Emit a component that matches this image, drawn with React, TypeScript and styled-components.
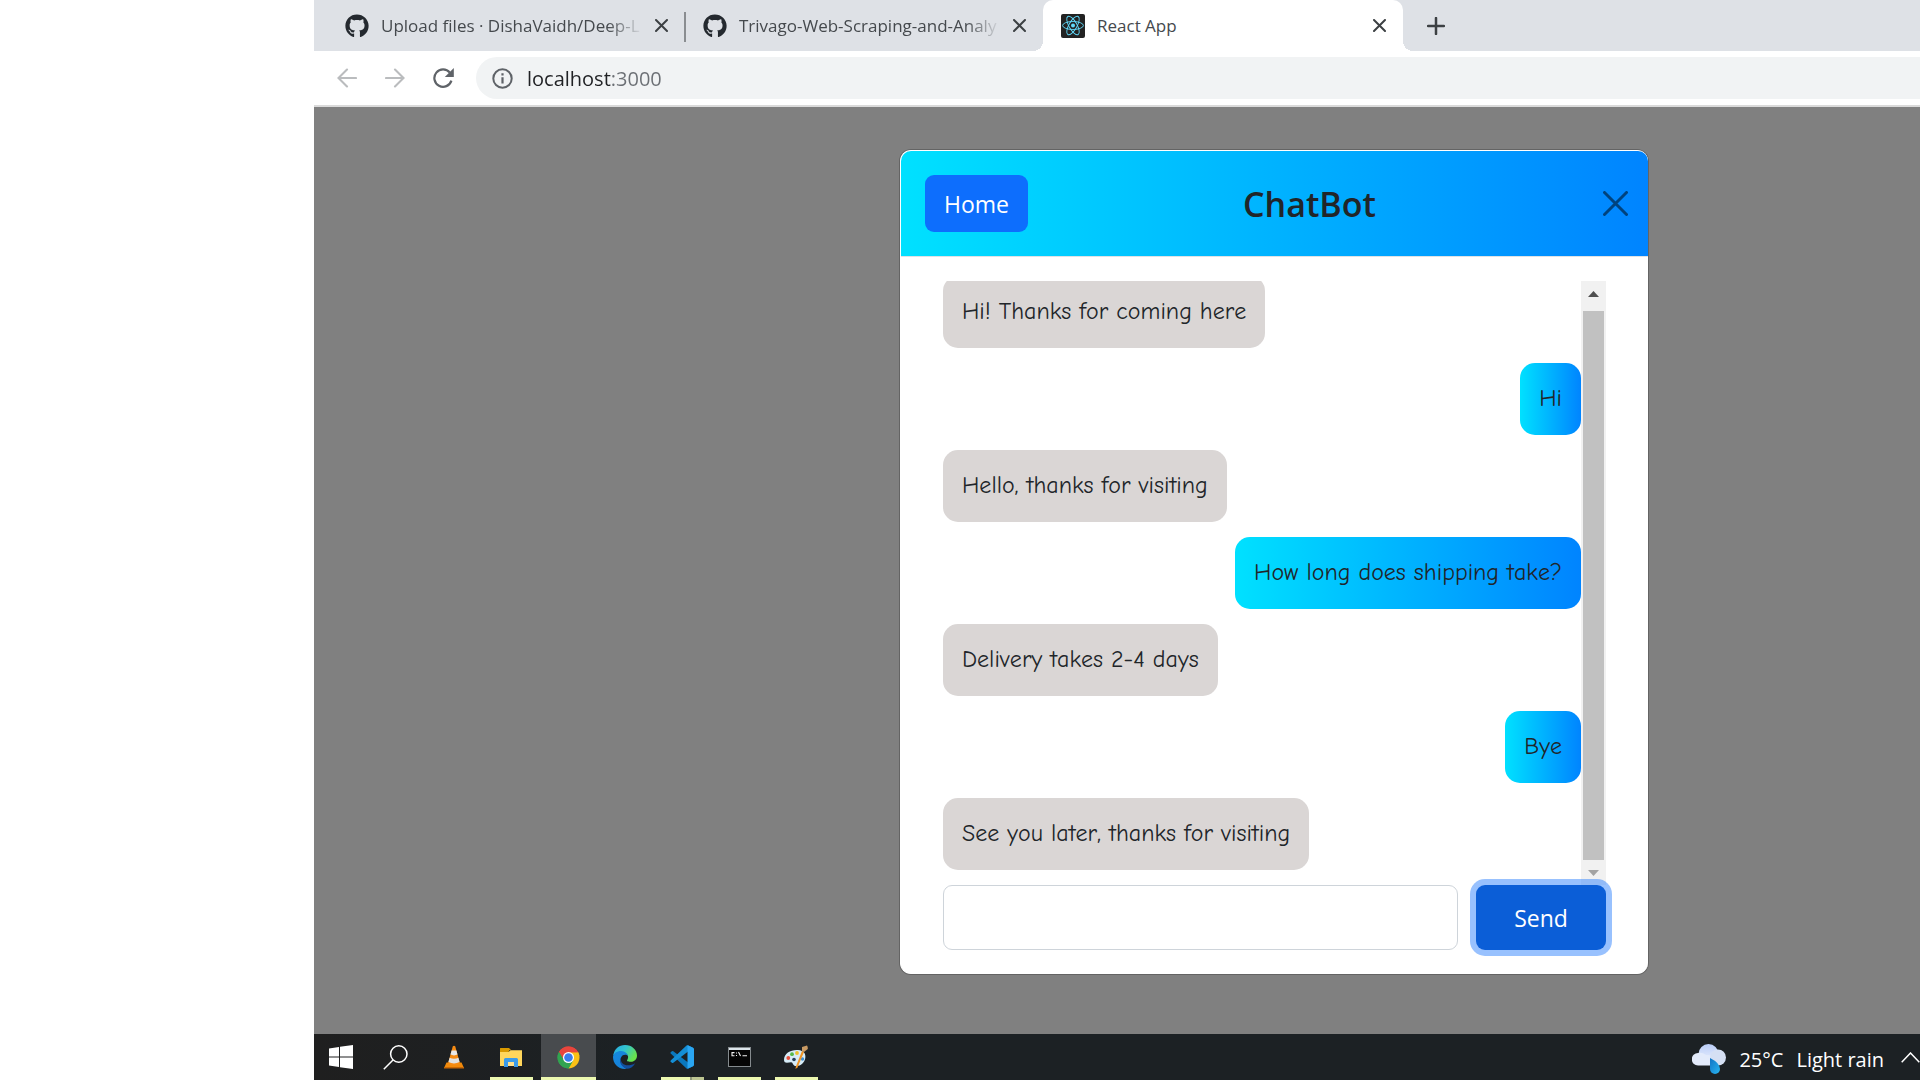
import React, { useState } from "react";
import styled, { createGlobalStyle, css } from "styled-components";
import { FaGithub } from "react-icons/fa";

const ui = `"Segoe UI", "Open Sans", "Noto Sans", sans-serif`;
const comic = `"Comic Sans MS", "Comic Neue", Lato, sans-serif`;
const brandGradient = "linear-gradient(90deg, #00e1ff 0%, #0084ff 100%)";

const GlobalStyle = createGlobalStyle`
  *, *::before, *::after { box-sizing: border-box; }
  body { margin: 0; background: #fff; font-family: ${ui}; color: #212529; }
  button, input { font: inherit; color: inherit; margin: 0; }
  h1, p, ul { margin: 0; padding: 0; }
`;

const Screen = styled.div`
  display: flex;
  flex-direction: column;
  min-height: 100vh;
  margin-left: 314px;
  overflow: hidden;
`;

const PlainButton = styled.button`
  display: flex;
  align-items: center;
  justify-content: center;
  flex: none;
  padding: 0;
  border: 0;
  background: none;
  cursor: pointer;
  svg { display: block; }
`;

/* Browser chrome */

const TabStrip = styled.div`
  display: flex;
  height: 51px;
  background: #dee1e6;
`;

const Tab = styled.div<{ $active?: boolean }>`
  position: relative;
  display: flex;
  align-items: center;
  flex: none;
  width: ${(p) => (p.$active ? 360 : 358)}px;
  padding: 0 12px 8px 18px;
  ${(p) =>
    p.$active &&
    css`
      background: #fff;
      border-radius: 10px 10px 0 0;
      &::before,
      &::after {
        content: "";
        position: absolute;
        bottom: 0;
        width: 10px;
        height: 10px;
      }
      &::before {
        left: -10px;
        background: radial-gradient(circle at 0 0, transparent 10px, #fff 10px);
      }
      &::after {
        right: -10px;
        background: radial-gradient(circle at 100% 0, transparent 10px, #fff 10px);
      }
    `}
`;

const FirstTabGap = styled.div`
  flex: none;
  width: 13px;
`;

const TabDivider = styled.span`
  flex: none;
  width: 2px;
  height: 30px;
  margin: 12px -1px 0;
  background: #8a8d91;
`;

const TabLink = styled.a`
  display: flex;
  align-items: center;
  gap: 12px;
  flex: 1;
  min-width: 0;
  padding-top: 8px;
  color: #45494d;
  font-size: 17px;
  line-height: 26px;
  text-decoration: none;
  svg { flex: none; display: block; color: #24292f; }
`;

const TabTitle = styled.span<{ $fade?: boolean }>`
  flex: 1;
  min-width: 0;
  overflow: hidden;
  white-space: nowrap;
  ${(p) =>
    p.$fade &&
    css`
      mask-image: linear-gradient(90deg, #000 calc(100% - 36px), transparent);
    `}
`;

const TabClose = styled(PlainButton)`
  width: 24px;
  height: 24px;
  margin: 8px 0 0 6px;
`;

const NewTab = styled(PlainButton)`
  width: 40px;
  margin-left: 13px;
`;

const Toolbar = styled.div`
  display: flex;
  align-items: center;
  height: 56px;
  padding-left: 9px;
  border-bottom: 2px solid #dadada;
  background: #fff;
`;

const NavButton = styled(PlainButton)`
  width: 48px;
  height: 42px;
`;

const AddressBar = styled.label`
  display: flex;
  align-items: center;
  gap: 14px;
  flex: 1;
  height: 42px;
  margin-left: 9px;
  padding-left: 16px;
  border-radius: 21px 0 0 21px;
  background: #f1f3f4;
`;

const AddressInput = styled.input`
  flex: 1;
  min-width: 0;
  height: 32px;
  padding: 0;
  border: 0;
  outline: 0;
  font-size: 20px;
  color: transparent;
  caret-color: #202124;
  background: linear-gradient(90deg, #202124 84px, #6b6f74 84px);
  background-clip: text;
  -webkit-background-clip: text;
`;

/* Page */

const Viewport = styled.main`
  flex: 1;
  width: 100vw;
  padding: 43px 0 60px;
  background: #808080;
`;

const Dialog = styled.section`
  width: 748px;
  margin: 0 auto;
  border: solid #fff;
  border-width: 1px 0 1px 1px;
  border-radius: 11px;
  background: #fff;
  box-shadow: 0 0 0 1px #646464;
`;

const DialogHeader = styled.header`
  display: flex;
  align-items: center;
  justify-content: space-between;
  height: 106px;
  padding: 0 9px 0 24px;
  border-bottom: 1px solid #dee2e6;
  border-radius: 10px 10px 0 0;
  background: ${brandGradient};
  background-clip: padding-box;
`;

const HomeButton = styled(PlainButton)`
  width: 103px;
  height: 57px;
  border-radius: 9px;
  background: #0d6efd;
  color: #fff;
  font-size: 23px;
`;

const Title = styled.h1`
  font-size: 34px;
  font-weight: 600;
  line-height: 44px;
`;

const CloseDialog = styled(PlainButton)`
  width: 48px;
  height: 48px;
  opacity: 0.5;
`;

const DialogBody = styled.div`
  padding: 24px 42px 23px 42px;
`;

const ChatWindow = styled.div`
  display: flex;
  height: 604px;
`;

const Messages = styled.ul`
  display: flex;
  flex-direction: column;
  justify-content: flex-end;
  gap: 15px;
  flex: 1;
  min-width: 0;
  padding-bottom: 15px;
  overflow: hidden;
  list-style: none;
`;

const Message = styled.li<{ $mine?: boolean }>`
  flex: none;
  align-self: ${(p) => (p.$mine ? "flex-end" : "flex-start")};
  padding: 17px 19px 19px;
  border-radius: 15px;
  background: ${(p) => (p.$mine ? brandGradient : "#dad6d5")};
  font-family: ${comic};
  font-size: 24px;
  font-kerning: none;
  line-height: 36px;
`;

const ScrollTrack = styled.div`
  display: flex;
  flex-direction: column;
  flex: none;
  width: 25px;
  background: #f1f1f1;
`;

const ScrollArrow = styled(PlainButton)<{ $down?: boolean }>`
  height: ${(p) => (p.$down ? 25 : 30)}px;
  padding-bottom: ${(p) => (p.$down ? 0 : 4)}px;
`;

const ScrollThumb = styled.div`
  flex: 1;
  margin: 0 2px;
  background: #c1c1c1;
`;

const Composer = styled.form`
  display: flex;
  gap: 18px;
`;

const MessageInput = styled.input`
  flex: 1;
  min-width: 0;
  height: 65px;
  padding: 0 18px;
  border: 1px solid #ced4da;
  border-radius: 9px;
  background: #fff;
  font-size: 24px;
  outline: 0;
`;

const SendButton = styled(PlainButton)`
  width: 130px;
  height: 65px;
  border-radius: 9px;
  background: #0b5ed7;
  box-shadow: 0 0 0 6px rgba(49, 132, 253, 0.5);
  color: #fff;
  font-size: 23px;
`;

/* Taskbar */

const Taskbar = styled.footer`
  display: flex;
  height: 46px;
  background: linear-gradient(90deg, #1f1f1f, #1c2124 320px);
`;

const SystemButton = styled(PlainButton)`
  width: 54px;
`;

const Apps = styled.div`
  display: flex;
  gap: 2px;
  margin-left: 5px;
`;

const AppButton = styled(PlainButton)<{ $running?: boolean; $active?: boolean; $stacked?: boolean }>`
  position: relative;
  width: 55px;
  padding-right: 1px;
  background: ${(p) => (p.$active ? "#484b4e" : "none")};
  ${(p) =>
    p.$running &&
    css`
      &::after {
        content: "";
        position: absolute;
        bottom: 0;
        left: ${p.$active ? 0 : 6}px;
        right: ${p.$active ? 0 : 6}px;
        height: 3px;
        background: ${p.$stacked
          ? "linear-gradient(90deg, #ecf8b0 29px, #8f977a 29px, #8f977a 31px, #bcc592 31px)"
          : "#ecf8b0"};
      }
    `}
`;

const Weather = styled(PlainButton)`
  gap: 13px;
  margin-left: auto;
  padding-top: 4px;
  color: #fff;
  font-size: 20px;
  white-space: nowrap;
`;

const TrayButton = styled(PlainButton)`
  width: 20px;
  margin-left: 16px;
`;

/* Drawings */

const Cross = ({ size = 12, width = 2, color = "#3c4043" }: { size?: number; width?: number; color?: string }) => (
  <svg width={size} height={size} viewBox={`0 0 ${size} ${size}`} aria-hidden="true">
    <path
      d={`M${width / 2} ${width / 2}L${size - width / 2} ${size - width / 2}M${size - width / 2} ${width / 2}L${width / 2} ${size - width / 2}`}
      stroke={color}
      strokeWidth={width}
      strokeLinecap="round"
    />
  </svg>
);

const ReactFavicon = () => (
  <svg width="24" height="24" viewBox="0 0 24 24" aria-hidden="true">
    <rect width="24" height="24" rx="2" fill="#222" />
    <g fill="none" stroke="#61dafb" strokeWidth="0.9">
      <ellipse cx="12" cy="11.5" rx="10.4" ry="4" />
      <ellipse cx="12" cy="11.5" rx="10.4" ry="4" transform="rotate(60 12 11.5)" />
      <ellipse cx="12" cy="11.5" rx="10.4" ry="4" transform="rotate(120 12 11.5)" />
    </g>
    <circle cx="12" cy="11.5" r="2" fill="#61dafb" />
  </svg>
);

const Arrow = ({ flip }: { flip?: boolean }) => (
  <svg width="20" height="20" viewBox="0 0 20 20" aria-hidden="true">
    <path
      d="M19 10H1.8M10 1.5L1.5 10l8.500 8.500"
      transform={flip ? "rotate(180 10 10)" : undefined}
      fill="none"
      stroke="#babcbe"
      strokeWidth="2.100"
      strokeLinecap="round"
    />
  </svg>
);

const Reload = () => (
  <svg width="21" height="21" viewBox="0 0 21 21" aria-hidden="true">
    <path d="M18.400 12.600A8.700 8.700 0 1 1 16.800 4.600" fill="none" stroke="#5f6368" strokeWidth="2.200" />
    <path d="M20.800 0v9h-9z" fill="#5f6368" />
  </svg>
);

const Info = () => (
  <svg width="21" height="21" viewBox="0 0 21 21" aria-hidden="true">
    <circle cx="10.500" cy="10.500" r="9.200" fill="none" stroke="#5f6368" strokeWidth="2" />
    <path d="M10.500 9.200v6.200M10.500 5.200v2.200" stroke="#5f6368" strokeWidth="2.200" />
  </svg>
);

const WindowsLogo = () => (
  <svg width="24" height="24" viewBox="0 0 24 24" fill="#fff" aria-hidden="true">
    <path d="M0 3.400L10 2v9.400H0zM11 1.800L24 0v11.400H11zM0 12.400h10V22L0 20.600zM11 12.400h13V24l-13-1.800z" />
  </svg>
);

const SearchGlyph = () => (
  <svg width="25" height="25" viewBox="0 0 25 25" fill="none" stroke="#fff" strokeWidth="1.500" aria-hidden="true">
    <circle cx="15.800" cy="9" r="8.200" />
    <path d="M10 15L.8 24.200" />
  </svg>
);

const Vlc = () => (
  <svg width="20" height="24" viewBox="0 0 20 24" aria-hidden="true">
    <path d="M2.500 17.500h15L20 23H0z" fill="#f18a0c" />
    <path d="M8.800 1.200q1.200-.9 2.400 0L16 18.500q-6 4-12 0z" fill="#f68b13" />
    <path d="M7.600 5.600h4.800l1.100 4q-3.500 1.600-7 0z" fill="#e8e8e8" />
    <path d="M5.600 12.800q4.400 2 8.800 0l1.200 4.300q-5.600 2.900-11.200 0z" fill="#e1e1e1" />
    <path d="M0 22h20v1.500H0z" fill="#c96703" />
  </svg>
);

const Folder = () => (
  <svg width="22" height="22" viewBox="0 0 22 22" aria-hidden="true">
    <path d="M0 2.500Q0 2 .5 2H9l2 2h-1.500L8.500 6H0z" fill="#d99a00" />
    <path d="M0 6h8.500l2-1.800H22V20H0z" fill="#ffd65c" />
    <path d="M4 21v-7.500q0-1.500 1.500-1.500h11q1.500 0 1.500 1.500V21h-4v-5H8v5z" fill="#3b9be8" />
    <path d="M8 16h6v4H8z" fill="#ffe08a" />
  </svg>
);

const Chrome = () => (
  <svg width="23" height="23" viewBox="0 0 48 48" aria-hidden="true">
    <path d="M24 24L4.100 12.500A23 23 0 0 1 43.900 12.500z" fill="#e8453c" />
    <path d="M24 24L43.900 12.500A23 23 0 0 1 24 47z" fill="#fbc116" />
    <path d="M24 24l9.500 6L24 47A23 23 0 0 1 4.100 12.500z" fill="#31a350" />
    <path d="M24 13h20.200q1 2 2.100 6l-.4 8L33.500 30 24 24z" fill="#fbc116" />
    <path d="M4.100 12.500L14.500 30 24 13h20.200A23 23 0 0 0 4.100 12.500z" fill="#e8453c" />
    <path d="M4.100 12.500L14.500 30 24 24l9.500 6L24 47A23 23 0 0 1 4.100 12.500z" fill="#31a350" />
    <circle cx="24" cy="24" r="11.500" fill="#fff" />
    <circle cx="24" cy="24" r="9" fill="#3b7ded" />
  </svg>
);

const Edge = () => (
  <svg width="24" height="24" viewBox="0 0 24 24" aria-hidden="true">
    <defs>
      <linearGradient id="edge-top" x1="0" y1="0" x2="1" y2="0.500">
        <stop offset="0" stopColor="#25a9e6" />
        <stop offset="0.500" stopColor="#33c4ce" />
        <stop offset="1" stopColor="#69e34b" />
      </linearGradient>
      <linearGradient id="edge-side" x1="0" y1="0" x2="0.600" y2="1">
        <stop offset="0" stopColor="#158ade" />
        <stop offset="1" stopColor="#1680d9" />
      </linearGradient>
    </defs>
    <path d="M.2 10.500C1.200 4 6 0 12 0c7 0 12 5 12 10.400 0 4-3 6.300-6.300 6.300-3.200 0-4.400-1-3.200-2.300C17 10 12 6.500 7.500 7 4 7.400 1.400 9 .2 10.500z" fill="url(#edge-top)" />
    <path d="M0 12c.2-4 4.500-6.200 8.200-6C12 6.200 14.600 8.800 15 11c-1.500-1.700-5.500-1.700-7 1.500C5.800 17.400 10 22 14 23.800 5.500 25 0 18.800 0 12z" fill="url(#edge-side)" />
    <path d="M8 12.500C6.500 20 15 22.500 22.200 18.200 20 22 17 23.600 14 23.800 8.500 22.500 5.500 17 8 12.500z" fill="#134f9e" />
  </svg>
);

const VsCode = () => (
  <svg width="24" height="24" viewBox="0 0 24 24" aria-hidden="true">
    <path d="M.7 7.300l1.200-1.100q.7-.5 1.400 0L23 21.200l-5 2.500q-.8.300-1.500-.3L.7 8.600q-.7-.6 0-1.300z" fill="#0a78bd" />
    <path d="M.7 16.700l1.200 1.100q.7.500 1.400 0L23 2.800 18 .3q-.8-.3-1.500.3L.7 15.400q-.7.600 0 1.300z" fill="#148ed5" />
    <path d="M17.500.2L23.100 2.700q.9.400.9 1.300v16q0 .9-.9 1.300L17.500 23.800z" fill="#2aa6f2" />
  </svg>
);

const Terminal = () => (
  <svg width="23" height="20" viewBox="0 0 23 20" aria-hidden="true">
    <rect x="0.500" y="0.500" width="22" height="19" fill="#050505" stroke="#858b8e" />
    <path d="M1 1h21v2H1z" fill="#dce5eb" />
    <path d="M6.500 5.600H4v3.200h2.500M8.500 5.500v1M8.500 8v1M10.500 5l2 4M14.500 8.700H19" fill="none" stroke="#f2f2f2" strokeWidth="1.100" />
  </svg>
);

const Paint = () => (
  <svg width="24" height="24" viewBox="0 0 24 24" aria-hidden="true">
    <path d="M0 15C0 8 7 4.500 14 5c6 .5 8 4 7.300 8-.8 4.500-4.300 8-9 8-4 0-3-4-5.300-3.800C4.500 17.500 0 19 0 15z" fill="#d6ecf7" />
    <circle cx="8" cy="9.200" r="1.900" fill="#54b948" />
    <circle cx="13" cy="8" r="1.900" fill="#efc12c" />
    <circle cx="4.300" cy="13" r="1.900" fill="#e8503c" />
    <circle cx="10" cy="14.500" r="1.800" fill="#263f57" />
    <circle cx="18.500" cy="14" r="1.700" fill="#3f8fd2" />
    <path d="M18 6l2 1-6.500 15.500L11.500 24l.4-2.500z" fill="#ef9526" />
    <path d="M18 2l5-1.500q1 1 .8 3.500L20 7l-2-1z" fill="#c89a63" />
  </svg>
);

const RainCloud = () => (
  <svg width="34" height="30" viewBox="0 0 34 30" aria-hidden="true">
    <defs>
      <linearGradient id="cloud" x1="0" y1="0" x2="0" y2="1">
        <stop offset="0" stopColor="#b9cdf8" />
        <stop offset="1" stopColor="#f1f5fe" />
      </linearGradient>
      <linearGradient id="drop" x1="0" y1="0" x2="1" y2="1">
        <stop offset="0" stopColor="#1173c4" />
        <stop offset="1" stopColor="#28b6f1" />
      </linearGradient>
    </defs>
    <circle cx="16.500" cy="10" r="10" fill="url(#cloud)" />
    <path d="M6 9a6 6 0 0 0 0 12.500h20V12L14 11Q10 8 6 9z" fill="#e3ebfb" />
    <circle cx="26" cy="13.500" r="8" fill="#d5e0f4" />
    <path d="M18 14q10 5 10 11a5 5 0 0 1-10 0z" fill="url(#drop)" />
  </svg>
);

const ArrowTip = ({ down }: { down?: boolean }) => (
  <svg width="11" height="6" viewBox="0 0 11 6" aria-hidden="true">
    <path d={down ? "M0 0h11L5.500 6z" : "M0 6h11L5.500 0z"} fill={down ? "#a3a3a3" : "#505050"} />
  </svg>
);

const tabs = [
  { title: "Upload files · DishaVaidh/Deep-L", icon: <FaGithub size={24} /> },
  { title: "Trivago-Web-Scraping-and-Analy", icon: <FaGithub size={24} /> },
  { title: "React App", icon: <ReactFavicon />, active: true },
];

const messages = [
  { text: "Hi! Thanks for coming here" },
  { text: "Hi", mine: true },
  { text: "Hello, thanks for visiting" },
  { text: "How long does shipping take?", mine: true },
  { text: "Delivery takes 2-4 days" },
  { text: "Bye", mine: true },
  { text: "See you later, thanks for visiting" },
];

const apps = [
  { name: "VLC media player", icon: <Vlc /> },
  { name: "File Explorer", icon: <Folder />, running: true },
  { name: "Google Chrome", icon: <Chrome />, running: true, active: true },
  { name: "Microsoft Edge", icon: <Edge /> },
  { name: "Visual Studio Code", icon: <VsCode />, running: true, stacked: true },
  { name: "Command Prompt", icon: <Terminal />, running: true },
  { name: "Paint", icon: <Paint />, running: true },
];

export default function App() {
  const [address, setAddress] = useState("localhost:3000");
  const [draft, setDraft] = useState("");

  return (
    <>
      <GlobalStyle />
      <Screen>
        <TabStrip>
          <FirstTabGap />
          {tabs.map((tab, i) => (
            <React.Fragment key={tab.title}>
              {i === 1 && <TabDivider />}
              <Tab $active={tab.active}>
                <TabLink href="#">
                  {tab.icon}
                  <TabTitle $fade={!tab.active}>{tab.title}</TabTitle>
                </TabLink>
                <TabClose type="button" aria-label="Close tab">
                  <Cross size={13} width={2} />
                </TabClose>
              </Tab>
            </React.Fragment>
          ))}
          <NewTab type="button" aria-label="New tab">
            <svg width="18" height="18" viewBox="0 0 18 18" aria-hidden="true">
              <path d="M9 1v16M1 9h16" stroke="#3c4043" strokeWidth="2.500" strokeLinecap="round" />
            </svg>
          </NewTab>
        </TabStrip>
        <Toolbar>
          <NavButton type="button" aria-label="Back"><Arrow /></NavButton>
          <NavButton type="button" aria-label="Forward"><Arrow flip /></NavButton>
          <NavButton type="button" aria-label="Reload"><Reload /></NavButton>
          <AddressBar>
            <Info />
            <AddressInput
              type="text"
              aria-label="Address"
              spellCheck={false}
              value={address}
              onChange={(e) => setAddress(e.target.value)}
            />
          </AddressBar>
        </Toolbar>

        <Viewport>
          <Dialog role="dialog" aria-labelledby="chat-title">
            <DialogHeader>
              <HomeButton type="button">Home</HomeButton>
              <Title id="chat-title">ChatBot</Title>
              <CloseDialog type="button" aria-label="Close">
                <Cross size={25} width={3} color="#000" />
              </CloseDialog>
            </DialogHeader>
            <DialogBody>
              <ChatWindow>
                <Messages>
                  {messages.map((m) => (
                    <Message key={m.text} $mine={m.mine}>{m.text}</Message>
                  ))}
                </Messages>
                <ScrollTrack>
                  <ScrollArrow type="button" aria-label="Scroll up"><ArrowTip /></ScrollArrow>
                  <ScrollThumb />
                  <ScrollArrow $down type="button" aria-label="Scroll down"><ArrowTip down /></ScrollArrow>
                </ScrollTrack>
              </ChatWindow>
              <Composer onSubmit={(e) => e.preventDefault()}>
                <MessageInput
                  type="text"
                  aria-label="Message"
                  value={draft}
                  onChange={(e) => setDraft(e.target.value)}
                />
                <SendButton type="submit">Send</SendButton>
              </Composer>
            </DialogBody>
          </Dialog>
        </Viewport>

        <Taskbar>
          <SystemButton type="button" aria-label="Start"><WindowsLogo /></SystemButton>
          <SystemButton type="button" aria-label="Search"><SearchGlyph /></SystemButton>
          <Apps>
            {apps.map((app) => (
              <AppButton
                key={app.name}
                type="button"
                aria-label={app.name}
                $running={app.running}
                $active={app.active}
                $stacked={app.stacked}
              >
                {app.icon}
              </AppButton>
            ))}
          </Apps>
          <Weather type="button">
            <RainCloud />
            <span>25°C</span>
            <span>Light rain</span>
          </Weather>
          <TrayButton type="button" aria-label="Show hidden icons">
            <svg width="19" height="11" viewBox="0 0 19 11" aria-hidden="true">
              <path d="M.7 10.300L9.500 1l8.800 9.300" fill="none" stroke="#fff" strokeWidth="1.500" />
            </svg>
          </TrayButton>
        </Taskbar>
      </Screen>
    </>
  );
}
